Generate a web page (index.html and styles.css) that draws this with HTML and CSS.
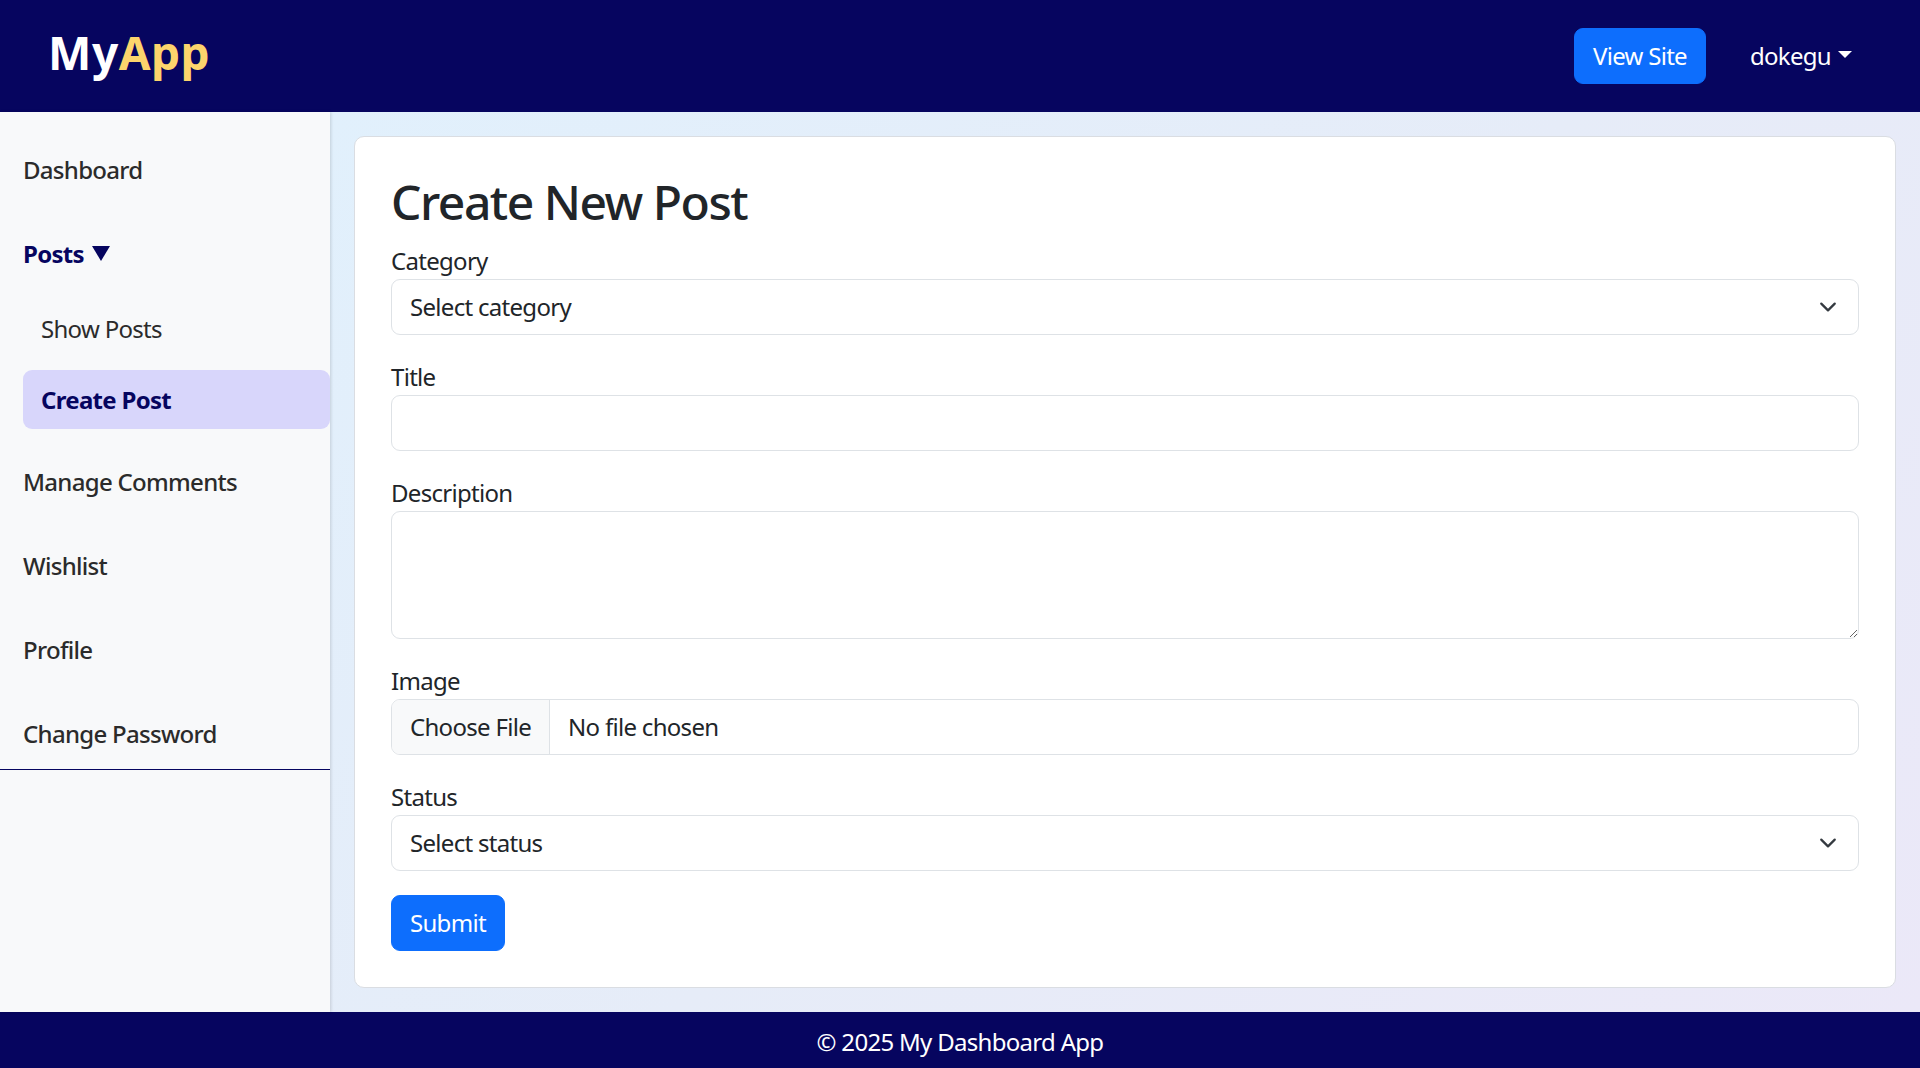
FILE: index.html
```html
<!DOCTYPE html>
<html lang="en">
<head>
<meta charset="utf-8">
<title>Create New Post</title>
<link rel="stylesheet" href="styles.css">
</head>
<body>
<div class="page">
  <header class="topbar">
    <a class="brand" href="#"><span class="brand-my">My</span><span class="brand-app">App</span></a>
    <div class="top-actions">
      <a class="btn btn-primary" href="#">View Site</a>
      <a class="user-toggle" href="#">dokegu<span class="caret"></span></a>
    </div>
  </header>
  <div class="layout">
    <aside class="sidebar">
      <ul class="side-nav">
        <li class="side-item"><a href="#">Dashboard</a></li>
        <li class="side-item side-group">
          <a href="#" class="group-toggle">Posts <svg class="tri" width="18" height="15" viewBox="0 0 18 15"><polygon points="0,0 18,0 9,15" fill="currentColor"/></svg></a>
        </li>
        <li class="sub-list-wrap">
          <ul class="sub-list">
            <li class="sub-item"><a href="#">Show Posts</a></li>
            <li class="sub-item active"><a href="#">Create Post</a></li>
          </ul>
        </li>
        <li class="side-item"><a href="#">Manage Comments</a></li>
        <li class="side-item"><a href="#">Wishlist</a></li>
        <li class="side-item"><a href="#">Profile</a></li>
        <li class="side-item last"><a href="#">Change Password</a></li>
      </ul>
    </aside>
    <main class="main">
      <section class="card">
        <h2 class="card-title">Create New Post</h2>
        <form class="post-form">
          <div class="field">
            <label class="form-label" for="category">Category</label>
            <select class="form-select" id="category">
              <option>Select category</option>
            </select>
          </div>
          <div class="field">
            <label class="form-label" for="title">Title</label>
            <input class="form-control" id="title" type="text">
          </div>
          <div class="field">
            <label class="form-label" for="desc">Description</label>
            <textarea class="form-control textarea" id="desc" rows="3"></textarea>
          </div>
          <div class="field">
            <label class="form-label" for="image">Image</label>
            <div class="file-input" id="image">
              <span class="file-btn">Choose File</span>
              <span class="file-name">No file chosen</span>
            </div>
          </div>
          <div class="field">
            <label class="form-label" for="status">Status</label>
            <select class="form-select" id="status">
              <option>Select status</option>
            </select>
          </div>
          <button type="button" class="btn btn-primary">Submit</button>
        </form>
      </section>
    </main>
  </div>
  <footer class="footer">© 2025 My Dashboard App</footer>
</div>
</body>
</html>
```

FILE: styles.css
```css
* { box-sizing: border-box; }
html, body { margin: 0; padding: 0; }
body {
  font-family: "Noto Sans", "Open Sans", "DejaVu Sans", sans-serif;
  font-size: 24px;
  line-height: 1.5;
  letter-spacing: -0.7px;
  color: #212529;
  background: #f8f9fa;
}
a { text-decoration: none; color: inherit; }
ul { list-style: none; margin: 0; padding: 0; }

.page {
  display: flex;
  flex-direction: column;
  min-height: 1068px;
}

/* Header */
.topbar {
  height: 112px;
  background: #06055f;
  display: flex;
  align-items: center;
  justify-content: space-between;
  padding: 0 44px 0 48px;
}
.brand {
  font-size: 46px;
  font-weight: 700;
  letter-spacing: 0.5px;
  line-height: 1;
  margin-bottom: 9px;
}
.brand-my { color: #ffffff; }
.brand-app { color: #fcd46c; }
.top-actions {
  display: flex;
  align-items: center;
  gap: 20px;
}
.btn {
  display: inline-block;
  font-family: inherit;
  font-size: 24px;
  letter-spacing: -0.7px;
  line-height: 36px;
  padding: 9px 18px;
  border: 1px solid transparent;
  border-radius: 9px;
  cursor: pointer;
}
.btn-primary {
  background: #0d6efd;
  border-color: #0d6efd;
  color: #ffffff;
}
.user-toggle {
  color: #ffffff;
  padding: 0 24px;
  display: flex;
  align-items: center;
}
.caret {
  display: inline-block;
  margin-left: 7px;
  width: 0;
  height: 0;
  border-top: 7px solid #ffffff;
  border-left: 7px solid transparent;
  border-right: 7px solid transparent;
  margin-top: -4px;
}

/* Layout */
.layout {
  flex: 1;
  display: flex;
}
.sidebar {
  width: 330px;
  flex: 0 0 330px;
  background: #f8f9fa;
  box-shadow: 1px 0 3px rgba(0, 0, 0, 0.14);
  position: relative;
  z-index: 1;
}
.side-nav {
  padding-top: 28px;
  border-bottom: 1px solid #06055f;
  padding-bottom: 5px;
}
.side-item a {
  display: flex;
  align-items: center;
  height: 60px;
  padding-left: 23px;
  color: #2b2b2b;
  font-weight: 500;
}
.side-item { margin-bottom: 24px; }
.side-item.last { margin-bottom: 0; }
.side-group { margin-bottom: 15px; }
.group-toggle {
  color: #06055f !important;
  font-weight: 700 !important;
  gap: 8px;
}
.tri { display: block; margin-top: -2px; }
.sub-list-wrap { margin-bottom: 23px; }
.sub-list {
  margin-left: 23px;
  display: flex;
  flex-direction: column;
  gap: 12px;
}
.sub-item a {
  display: flex;
  align-items: center;
  height: 59px;
  padding-left: 18px;
  border-radius: 9px;
  color: #2b2b2b;
}
.sub-item.active a {
  background: #d8d6fb;
  color: #06055f;
  font-weight: 700;
}

/* Main */
.main {
  flex: 1;
  padding: 24px 24px 24px;
  background: linear-gradient(135deg, #e1f0fc 0%, #e6ecf8 50%, #ebe8f8 100%);
}
.card {
  background: #ffffff;
  border: 1px solid #dadde2;
  border-radius: 10px;
  padding: 36px;
}
.card-title {
  font-size: 48px;
  font-weight: 500;
  line-height: 1.2;
  letter-spacing: -1.5px;
  margin: 0 0 12px;
  color: #212529;
}
.field { margin-bottom: 24px; }
.form-label {
  display: block;
  line-height: 36px;
}
.form-control,
.form-select,
.file-input {
  display: block;
  width: 100%;
  height: 56px;
  font-family: inherit;
  font-size: 24px;
  letter-spacing: -0.7px;
  line-height: 36px;
  color: #212529;
  background-color: #ffffff;
  border: 1px solid #dee2e6;
  border-radius: 9px;
  padding: 9px 18px;
}
.form-select {
  appearance: none;
  -webkit-appearance: none;
  padding-right: 54px;
  background-image: url("data:image/svg+xml,%3csvg xmlns='http://www.w3.org/2000/svg' viewBox='0 0 16 16'%3e%3cpath fill='none' stroke='%23343a40' stroke-linecap='round' stroke-linejoin='round' stroke-width='2' d='m2 5 6 6 6-6'/%3e%3c/svg%3e");
  background-repeat: no-repeat;
  background-position: right 18px center;
  background-size: 24px 18px;
}
.textarea {
  height: 128px;
  resize: vertical;
}
.file-input {
  display: flex;
  padding: 0;
  overflow: hidden;
}
.file-btn {
  display: flex;
  align-items: center;
  padding: 0 18px;
  background: #f8f9fa;
  border-right: 1px solid #dee2e6;
}
.file-name {
  display: flex;
  align-items: center;
  padding: 0 18px;
}

/* Footer */
.footer {
  height: 56px;
  background: #06055f;
  color: #ffffff;
  text-align: center;
  padding-top: 4px;
  line-height: 52px;
}
```
